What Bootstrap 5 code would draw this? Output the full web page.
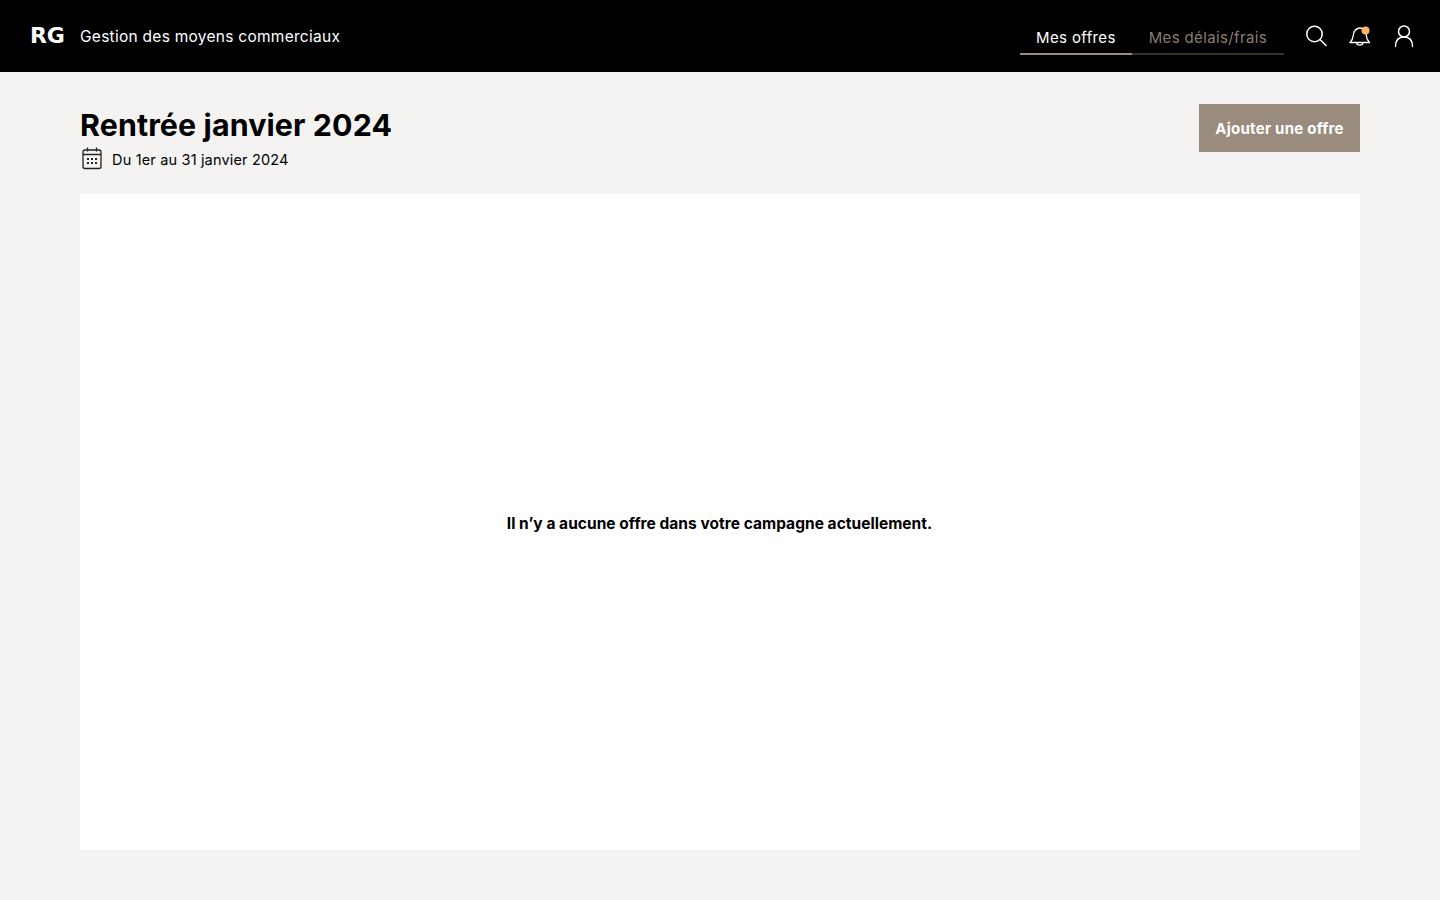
<!DOCTYPE html>
<html lang="fr">
<head>
<meta charset="utf-8">
<title>Gestion des moyens commerciaux</title>
<link href="https://cdn.jsdelivr.net/npm/bootstrap@5.3.0/dist/css/bootstrap.min.css" rel="stylesheet">
<style>
html,body{height:100%}
body{background:#f4f3f1;font-family:Inter,"Liberation Sans",sans-serif;color:#000;overflow:hidden}
.topbar{height:72px;background:#000;padding-left:30px;padding-right:14px}
.logo-mark{width:35px;margin-right:15px;color:#fff;font-family:"DejaVu Sans",sans-serif;font-size:22px;font-weight:700;letter-spacing:-.3px;line-height:1}
.app-name{color:#fff;font-size:15.500px;letter-spacing:.27px;font-weight:400;margin-top:2px}
.tabs-row{margin-right:10px;margin-top:2px}
.tab-item{display:block;height:35px;padding:0 17px;font-size:15px;line-height:36px;text-decoration:none;border-bottom:2px solid #3a3028;color:#8a7e71;letter-spacing:.36px}
.tab-item.is-on{color:#fff;border-bottom-color:#998c7e;padding:0 16px}
.icon-cell{width:44px;height:44px}
.icon-cell svg{display:block}
.page-wrap{padding:32px 80px 0}
.page-title{font-size:30.400px;font-weight:700;line-height:40px;margin:1px 0 0;letter-spacing:.1px}
.date-line{font-size:14.500px;line-height:20px;margin-top:1px;gap:8px;letter-spacing:.17px}
.date-text{margin-top:4px}
.add-btn{width:161px;height:48px;background:#998c7e;color:#fff;border:0;border-radius:0;font-size:15px;font-weight:700;padding:2px 0 0;letter-spacing:.25px}
.add-btn:hover{background:#998c7e;color:#fff}
.empty-panel{height:656px;background:#fff;margin-top:24px}
.empty-text{font-size:15.500px;font-weight:700;margin:3px 1px 0 0;letter-spacing:.03px}
</style>
</head>
<body>
<header class="topbar d-flex align-items-center justify-content-between">
  <div class="d-flex align-items-center">
    <span class="logo-mark">RG</span>
    <span class="app-name">Gestion des moyens commerciaux</span>
  </div>
  <div class="d-flex align-items-center">
    <nav class="tabs-row d-flex">
      <a class="tab-item is-on" href="#">Mes offres</a>
      <a class="tab-item" href="#">Mes délais/frais</a>
    </nav>
    <div class="icon-cell d-flex align-items-center justify-content-center">
      <svg width="24" height="24" viewBox="0 0 24 24" fill="none" stroke="#fff" stroke-width="1.5"><circle cx="10.500" cy="10" r="7.700"/><path d="M16 15.500l6 6" stroke-linecap="round"/></svg>
    </div>
    <div class="icon-cell d-flex align-items-center justify-content-center">
      <svg width="24" height="24" viewBox="0 0 24 24" fill="none" stroke="#fff" stroke-width="1.300"><path d="M2 18.500c2-1.800 2.800-3.500 3.100-6.500.4-4 1.900-7.500 6.500-8 4.700-.3 6.300 3.500 6.800 8 .3 3 1.200 4.700 3.100 6.500z" stroke-linejoin="round"/><path d="M8.500 18.500c.2 3.600 6.300 3.600 6.500 0"/><circle cx="17.500" cy="6.500" r="4" fill="#fdb462" stroke="none"/></svg>
    </div>
    <div class="icon-cell d-flex align-items-center justify-content-center">
      <svg width="24" height="24" viewBox="0 0 24 24" fill="none" stroke="#fff" stroke-width="1.500"><circle cx="12" cy="7.500" r="5.500"/><path d="M3.500 22.500c0-6 3-9.500 8.500-9.500s8.500 3.500 8.500 9.500" stroke-linecap="round"/></svg>
    </div>
  </div>
</header>
<main class="page-wrap">
  <div class="d-flex justify-content-between align-items-start">
    <div>
      <h1 class="page-title">Rentrée janvier 2024</h1>
      <div class="date-line d-flex align-items-center">
        <svg width="24" height="24" viewBox="0 0 24 24" fill="none" stroke="#222" stroke-width="1.300"><rect x="3" y="4" width="18" height="18.500" rx="2"/><path d="M3 8.500h18M7.500 1.500v4M16.500 1.500v4"/><g fill="#222" stroke="none"><rect x="7" y="12" width="2" height="2"/><rect x="11" y="12" width="2" height="2"/><rect x="15" y="12" width="2" height="2"/><rect x="7" y="16" width="2" height="2"/><rect x="11" y="16" width="2" height="2"/><rect x="15" y="16" width="2" height="2"/></g></svg>
        <span class="date-text">Du 1er au 31 janvier 2024</span>
      </div>
    </div>
    <button class="btn add-btn" type="button">Ajouter une offre</button>
  </div>
  <section class="empty-panel d-flex align-items-center justify-content-center">
    <p class="empty-text">Il n’y a aucune offre dans votre campagne actuellement.</p>
  </section>
</main>
<script src="https://cdn.jsdelivr.net/npm/bootstrap@5.3.0/dist/js/bootstrap.bundle.min.js"></script>
</body>
</html>
